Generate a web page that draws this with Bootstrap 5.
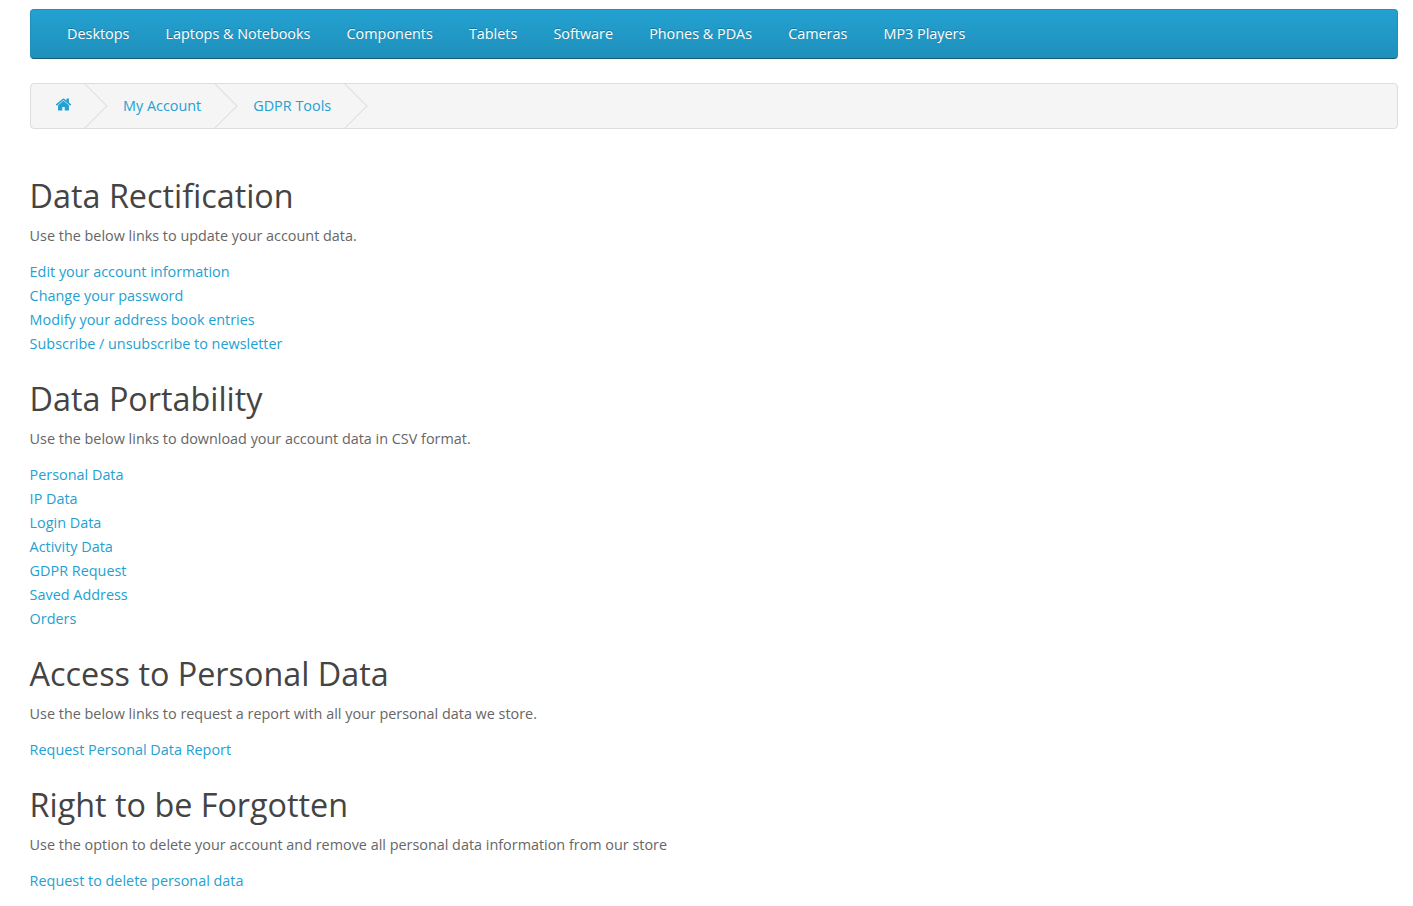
<!DOCTYPE html>
<html lang="en">
<head>
<meta charset="utf-8">
<title>GDPR Tools</title>
<link href="https://cdn.jsdelivr.net/npm/bootstrap@5.3.0/dist/css/bootstrap.min.css" rel="stylesheet">
<style>
body { font-family: "Open Sans", sans-serif; font-size: 14.4px; line-height: 24px; color: #666; background: #fff; }
a { color: #23a1d1; text-decoration: none; }
.page-wrap { padding: 9px 15px 0 30px; }
.top-menu { height: 50px; background-color: #229ac8; background-image: linear-gradient(to bottom, #23a1d1, #1f90bb); border: 1px solid #1f90bb; border-bottom-color: #145e7a; border-radius: 4px; padding-left: 21px; }
.top-menu a { color: #fff; padding: 0 15px; margin-right: 6.1px; line-height: 48px; text-shadow: 0 -1px 0 rgba(0,0,0,.25); white-space: nowrap; }
.crumbs { height: 46px; margin: 24px 0 0; padding: 0; list-style: none; background: #f5f5f5; border: 1px solid #ddd; border-radius: 4px; overflow: hidden; }
.crumbs li { position: relative; padding: 0 36px 0 16px; line-height: 44px; }
.crumbs li:first-child { padding: 0 35px 0 24px; }
.crumbs li::after { content: ""; position: absolute; top: 6px; right: 6px; width: 32px; height: 32px; border-top: 1px solid #ddd; border-right: 1px solid #ddd; transform: rotate(45deg); }
.crumbs svg { width: 17px; height: 17px; fill: #23a1d1; display: block; margin-top: 12px; }
.sect-title { font-family: "Open Sans", sans-serif; font-size: 32.35px; font-weight: 400; line-height: 34px; color: #444; margin: 0 0 12px; }
.sect-note { margin: 0 0 12px; }
.sect-links { margin: 0 0 25px; padding: 0; list-style: none; }
.first-sect { margin-top: 49px; }
section { margin-left: -.4px; }
</style>
</head>
<body>
<div class="page-wrap">
  <nav class="top-menu d-flex align-items-center">
    <a href="#">Desktops</a>
    <a href="#">Laptops &amp; Notebooks</a>
    <a href="#">Components</a>
    <a href="#">Tablets</a>
    <a href="#">Software</a>
    <a href="#">Phones &amp; PDAs</a>
    <a href="#">Cameras</a>
    <a href="#">MP3 Players</a>
  </nav>
  <ul class="crumbs d-flex">
    <li><a href="#" aria-label="Home"><svg viewBox="0 0 1792 1792"><path d="M1472 992v480q0 26-19 45t-45 19h-384v-384h-256v384h-384q-26 0-45-19t-19-45v-480q0-1 .5-3t.5-3l575-474 575 474q1 2 1 6zm223-69l-62 74q-8 9-21 11h-3q-13 0-21-7l-692-577-692 577q-12 8-24 7-13-2-21-11l-62-74q-8-10-7-23.5t11-21.5l719-599q32-26 76-26t76 26l244 204v-195q0-14 9-23t23-9h192q14 0 23 9t9 23v408l219 182q10 8 11 21.5t-7 23.5z"/></svg></a></li>
    <li><a href="#">My Account</a></li>
    <li><a href="#">GDPR Tools</a></li>
  </ul>
  <section class="first-sect">
    <h2 class="sect-title">Data Rectification</h2>
    <p class="sect-note">Use the below links to update your account data.</p>
    <ul class="sect-links">
      <li><a href="#">Edit your account information</a></li>
      <li><a href="#">Change your password</a></li>
      <li><a href="#">Modify your address book entries</a></li>
      <li><a href="#">Subscribe / unsubscribe to newsletter</a></li>
    </ul>
  </section>
  <section>
    <h2 class="sect-title">Data Portability</h2>
    <p class="sect-note">Use the below links to download your account data in CSV format.</p>
    <ul class="sect-links">
      <li><a href="#">Personal Data</a></li>
      <li><a href="#">IP Data</a></li>
      <li><a href="#">Login Data</a></li>
      <li><a href="#">Activity Data</a></li>
      <li><a href="#">GDPR Request</a></li>
      <li><a href="#">Saved Address</a></li>
      <li><a href="#">Orders</a></li>
    </ul>
  </section>
  <section>
    <h2 class="sect-title">Access to Personal Data</h2>
    <p class="sect-note">Use the below links to request a report with all your personal data we store.</p>
    <ul class="sect-links">
      <li><a href="#">Request Personal Data Report</a></li>
    </ul>
  </section>
  <section>
    <h2 class="sect-title">Right to be Forgotten</h2>
    <p class="sect-note">Use the option to delete your account and remove all personal data information from our store</p>
    <ul class="sect-links">
      <li><a href="#">Request to delete personal data</a></li>
    </ul>
  </section>
</div>
<script src="https://cdn.jsdelivr.net/npm/bootstrap@5.3.0/dist/js/bootstrap.bundle.min.js"></script>
</body>
</html>
